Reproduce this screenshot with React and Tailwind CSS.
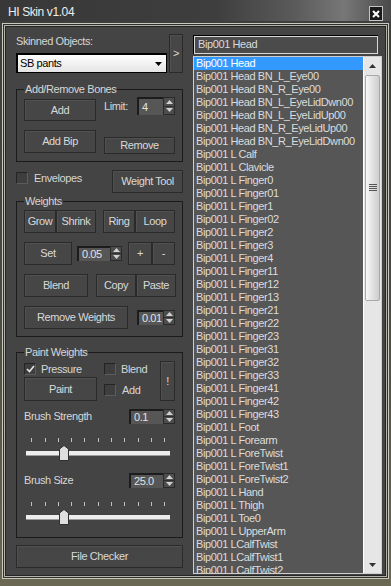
import React from 'react';

const bones = [
  'Bip001 Head',
  'Bip001 Head BN_L_Eye00',
  'Bip001 Head BN_R_Eye00',
  'Bip001 Head BN_L_EyeLidDwn00',
  'Bip001 Head BN_L_EyeLidUp00',
  'Bip001 Head BN_R_EyeLidUp00',
  'Bip001 Head BN_R_EyeLidDwn00',
  'Bip001 L Calf',
  'Bip001 L Clavicle',
  'Bip001 L Finger0',
  'Bip001 L Finger01',
  'Bip001 L Finger1',
  'Bip001 L Finger02',
  'Bip001 L Finger2',
  'Bip001 L Finger3',
  'Bip001 L Finger4',
  'Bip001 L Finger11',
  'Bip001 L Finger12',
  'Bip001 L Finger13',
  'Bip001 L Finger21',
  'Bip001 L Finger22',
  'Bip001 L Finger23',
  'Bip001 L Finger31',
  'Bip001 L Finger32',
  'Bip001 L Finger33',
  'Bip001 L Finger41',
  'Bip001 L Finger42',
  'Bip001 L Finger43',
  'Bip001 L Foot',
  'Bip001 L Forearm',
  'Bip001 L ForeTwist',
  'Bip001 L ForeTwist1',
  'Bip001 L ForeTwist2',
  'Bip001 L Hand',
  'Bip001 L Thigh',
  'Bip001 L Toe0',
  'Bip001 L UpperArm',
  'Bip001 LCalfTwist',
  'Bip001 LCalfTwist1',
  'Bip001 LCalfTwist2',
];

function Btn({ className = '', children }) {
  return (
    <div
      className={`flex items-center justify-center border border-[#2a2a2a] bg-[#464646] text-[#d9d9d9] shadow-[inset_1px_1px_0_#515151] ${className}`}
    >
      {children}
    </div>
  );
}

function Arrows() {
  return (
    <div className="flex w-[12px] flex-col border border-[#2a2a2a] bg-[#4d4d4d]">
      <div className="flex flex-1 items-center justify-center border-b border-[#2f2f2f]">
        <svg width="7" height="4" viewBox="0 0 7 4">
          <path d="M0 4 L3.5 0 L7 4 Z" fill="#d0d0d0" />
        </svg>
      </div>
      <div className="flex flex-1 items-center justify-center">
        <svg width="7" height="4" viewBox="0 0 7 4">
          <path d="M0 0 L7 0 L3.5 4 Z" fill="#d0d0d0" />
        </svg>
      </div>
    </div>
  );
}

function Spinner({ value, field = '', className = '' }) {
  return (
    <div className={`flex ${className}`}>
      <div
        className={`flex items-center border-l-2 border-t-2 border-[#1c1c1c] bg-[#565656] pl-[3px] text-[#e2e2e2] ${field}`}
      >
        {value}
      </div>
      <Arrows />
    </div>
  );
}

function Check({ checked }) {
  return (
    <div className="flex h-[12px] w-[12px] shrink-0 items-center justify-center border border-[#242424] border-b-[#5c5c5c] border-r-[#5c5c5c] bg-[#3e3e3e]">
      {checked && (
        <svg width="9" height="8" viewBox="0 0 9 8">
          <path d="M1 4 L3.5 6.5 L8 1" stroke="#e6e6e6" strokeWidth="1.6" fill="none" />
        </svg>
      )}
    </div>
  );
}

function Group({ title, className = '', children }) {
  return (
    <div className={`relative border border-[#1b1b1b] ${className}`}>
      <span className="absolute left-[7px] top-[-8px] bg-[#444] px-[1px] leading-[14px] text-[#d6d6d6]">
        {title}
      </span>
      {children}
    </div>
  );
}

function Slider() {
  const ticks = [14, 28, 41, 54, 67, 81, 94, 107, 121, 134, 147];
  return (
    <svg width="165" height="49" className="block">
      {ticks.map((x) => (
        <rect key={x} x={x} y={14} width={1} height={4} fill="#c4c4c4" />
      ))}
      <rect x="9" y="27" width="144" height="4" fill="#ededed" />
      <rect x="9" y="31" width="144" height="1" fill="#9c9c9c" />
      <path d="M42.5 36.5 V25 L47 21.5 L51.5 25 V36.5 Z" fill="#dedede" stroke="#2f2f2f" />
    </svg>
  );
}

export default function App() {
  return (
    <div className="flex h-[586px] w-[391px] flex-col overflow-hidden bg-[#3d3d3a] font-['Liberation_Sans',Arial,sans-serif] text-[11px] tracking-[-0.4px] text-[#d6d6d6]">
      {/* title bar */}
      <div className="flex h-[21px] items-start justify-between bg-[linear-gradient(90deg,#383838_0%,#3e3e3e_55%,#5a5a5a_75%,#777777_88%,#4a4a4a_100%)] pl-[8px] pr-[8px] pt-[5px]">
        <span className="text-[12px] leading-[14px] text-[#ededed]">HI Skin v1.04</span>
        <div className="mt-[1px] flex h-[15px] w-[14px] items-center justify-center border border-[#c4c4c4] bg-[#1a1a1a]">
          <svg width="8" height="8" viewBox="0 0 8 8">
            <path d="M1 1 L7 7 M7 1 L1 7" stroke="#ffffff" strokeWidth="2" />
          </svg>
        </div>
      </div>

      {/* frame */}
      <div className="flex flex-1 bg-[linear-gradient(180deg,#3e3e3e_0%,#4a4943_50%,#6a6852_100%)] px-[2px] pb-[7px] pt-[2px]">
        <div className="flex flex-1 border border-[#c9c9bd]">
          <div className="flex flex-1 border border-[#2f2f2f]">
            <div className="flex flex-1 border border-[#b3b3a8]">
              <div className="flex flex-1 border border-[#262626] bg-[#444] pl-[10px] pr-[3px] pt-[7px]">
                {/* left column */}
                <div className="flex w-[167px] flex-col">
                  <div className="flex h-[39px]">
                    <div className="flex w-[151px] flex-col">
                      <div className="h-[14px] leading-[14px]">Skinned Objects:</div>
                      <div className="mt-[5px] flex h-[20px] items-center justify-between border-b border-l-2 border-r border-t-2 border-black bg-gradient-to-b from-white to-[#e4e4e4] pl-[2px] pr-[4px] text-black">
                        <span>SB pants</span>
                        <svg width="7" height="4" viewBox="0 0 7 4">
                          <path d="M0 0 L7 0 L3.5 4 Z" fill="#000" />
                        </svg>
                      </div>
                    </div>
                    <Btn className="ml-[2px] h-[39px] w-[14px]">&gt;</Btn>
                  </div>

                  <Group title="Add/Remove Bones" className="mt-[16px] flex pb-[7px] pl-[7px] pt-[9px]">
                    <div className="flex w-[72px] flex-col">
                      <Btn className="h-[22px]">Add</Btn>
                      <Btn className="mt-[9px] h-[23px]">Add Bip</Btn>
                    </div>
                    <div className="ml-[8px] flex w-[71px] flex-col">
                      <div className="-mt-[2px] flex h-[18px] items-center justify-between">
                        <span>Limit:</span>
                        <Spinner value="4" field="w-[26px]" />
                      </div>
                      <Btn className="mt-[22px] h-[17px]">Remove</Btn>
                    </div>
                  </Group>

                  <div className="mt-[8px] flex h-[23px] items-start">
                    <div className="mt-[2px]">
                      <Check />
                    </div>
                    <span className="ml-[6px] mt-[1px] leading-[14px]">Envelopes</span>
                    <Btn className="ml-auto h-[23px] w-[71px]">Weight Tool</Btn>
                  </div>

                  <Group title="Weights" className="mt-[8px] pb-[7px] pl-[7px] pt-[8px]">
                    <div className="flex h-[23px]">
                      <Btn className="w-[32px]">Grow</Btn>
                      <Btn className="w-[40px]">Shrink</Btn>
                      <Btn className="ml-[7px] w-[32px]">Ring</Btn>
                      <Btn className="w-[40px]">Loop</Btn>
                    </div>
                    <div className="mt-[9px] flex h-[23px] items-center">
                      <Btn className="h-[23px] w-[48px]">Set</Btn>
                      <Spinner value="0.05" field="w-[33px]" className="ml-[5px] h-[15px]" />
                      <Btn className="ml-[6px] h-[23px] w-[24px]">+</Btn>
                      <Btn className="h-[23px] w-[23px]">-</Btn>
                    </div>
                    <div className="mt-[9px] flex h-[23px]">
                      <Btn className="w-[64px]">Blend</Btn>
                      <Btn className="ml-[8px] w-[40px]">Copy</Btn>
                      <Btn className="w-[40px]">Paste</Btn>
                    </div>
                    <div className="mt-[9px] flex h-[23px] items-center">
                      <Btn className="h-[23px] w-[104px]">Remove Weights</Btn>
                      <Spinner value="0.01" field="w-[26px]" className="ml-[9px] h-[15px]" />
                    </div>
                  </Group>

                  <Group title="Paint Weights" className="mt-[15px] pl-[7px] pr-[7px] pt-[8px]">
                    <div className="flex items-start">
                      <div className="flex w-[73px] flex-col">
                        <div className="mt-[2px] flex h-[12px] items-center">
                          <Check checked />
                          <span className="ml-[5px] leading-[14px]">Pressure</span>
                        </div>
                        <Btn className="mt-[2px] h-[24px]">Paint</Btn>
                      </div>
                      <div className="ml-[7px] flex flex-col">
                        <div className="mt-[2px] flex h-[12px] items-center">
                          <Check />
                          <span className="ml-[5px] leading-[14px]">Blend</span>
                        </div>
                        <div className="mt-[9px] flex h-[12px] items-center">
                          <Check />
                          <span className="ml-[6px] leading-[14px]">Add</span>
                        </div>
                      </div>
                      <Btn className="ml-auto h-[40px] w-[15px]">!</Btn>
                    </div>
                    <div className="mt-[8px] flex h-[15px] items-center justify-between">
                      <span>Brush Strength</span>
                      <Spinner value="0.1" field="w-[34px]" className="h-[15px]" />
                    </div>
                    <div className="-ml-[7px]">
                      <Slider />
                    </div>
                    <div className="flex h-[15px] items-center justify-between">
                      <span>Brush Size</span>
                      <Spinner value="25.0" field="w-[34px]" className="h-[15px]" />
                    </div>
                    <div className="-ml-[7px]">
                      <Slider />
                    </div>
                  </Group>

                  <Btn className="mt-[7px] h-[23px]">File Checker</Btn>
                </div>

                {/* right column */}
                <div className="ml-[10px] flex w-[189px] flex-col">
                  <div className="mt-[1px] h-[19px] w-[185px] border-l border-t border-black">
                    <div className="h-full border border-[#d8d8d8] bg-[#4b4b4b] pl-[3px] leading-[15px] text-[#dadada]">
                      Bip001 Head
                    </div>
                  </div>
                  <div className="mt-[2px] flex h-[518px] border border-[#cdcdcd] bg-[#565656]">
                    <div className="flex-1 overflow-hidden">
                      {bones.map((b, i) => (
                        <div
                          key={b}
                          className={
                            i === 0
                              ? 'h-[13px] whitespace-nowrap bg-[#3399ff] pl-[2px] leading-[13px] text-white'
                              : 'h-[13px] whitespace-nowrap pl-[2px] leading-[13px] text-[#dcdcdc]'
                          }
                        >
                          {b}
                        </div>
                      ))}
                    </div>
                    <div className="flex w-[18px] flex-col border-l border-white bg-[#e6e6e6]">
                      <div className="flex h-[17px] items-center justify-center">
                        <svg width="7" height="4" viewBox="0 0 7 4">
                          <path d="M0 4 L3.5 0 L7 4 Z" fill="#333" />
                        </svg>
                      </div>
                      <div className="mx-[1px] mt-[1px] flex h-[226px] items-center justify-center rounded-[2px] border border-[#a9a9a9] bg-gradient-to-r from-[#f7f7f7] to-[#cdcdcd]">
                        <svg width="8" height="8" viewBox="0 0 8 8">
                          <path d="M0 0.5 H8 M0 2.5 H8 M0 4.5 H8 M0 6.5 H8" stroke="#555" strokeWidth="1" />
                        </svg>
                      </div>
                      <div className="flex-1" />
                      <div className="flex h-[17px] items-center justify-center">
                        <svg width="7" height="4" viewBox="0 0 7 4">
                          <path d="M0 0 L7 0 L3.5 4 Z" fill="#333" />
                        </svg>
                      </div>
                    </div>
                  </div>
                </div>
              </div>
            </div>
          </div>
        </div>
      </div>
    </div>
  );
}
